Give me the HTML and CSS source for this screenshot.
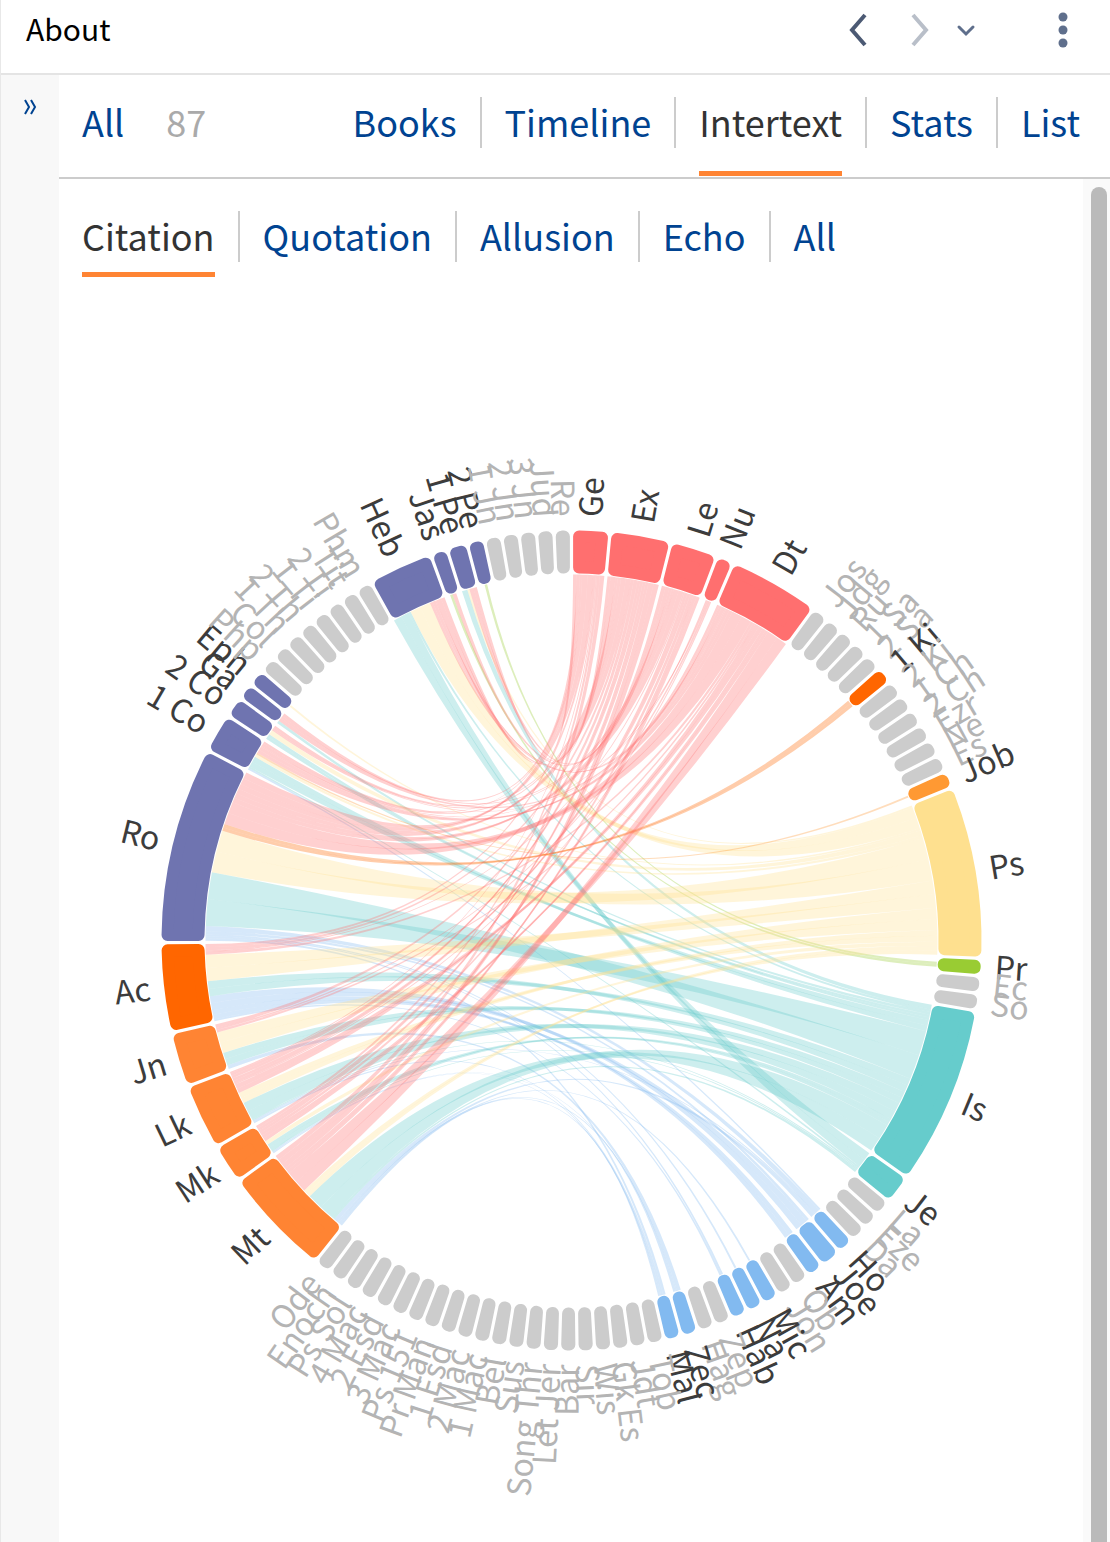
FILE: index.html
```html
<!DOCTYPE html>
<html lang="en">
  <head>
    <meta charset="UTF-8" />
    <meta name="viewport" content="width=device-width, initial-scale=1.0" />
    <title>About</title>
    <link rel="stylesheet" href="styles.css">
  </head>

  <body>
    <header class="titlebar">
      <h1>About</h1>
      <div class="history">
        <button class="icon back" aria-label="Back">
          <svg width="20" height="34" viewBox="0 0 20 34"><path d="M17 2L4 17L17 32" /></svg>
        </button>
        <button class="icon forward" aria-label="Forward">
          <svg width="20" height="34" viewBox="0 0 20 34"><path d="M3 2L16 17L3 32" /></svg>
        </button>
        <button class="icon more" aria-label="History">
          <svg width="20" height="14" viewBox="0 0 20 14"><path d="M3 4L10 11L17 4" /></svg>
        </button>
        <button class="icon menu" aria-label="Menu">
          <svg width="10" height="36" viewBox="0 0 10 36"><circle cx="5" cy="5" r="4.5" /><circle cx="5" cy="18" r="4.5" /><circle cx="5" cy="31" r="4.5" /></svg>
        </button>
      </div>
    </header>

    <div class="page">
      <aside class="sidebar">
        <button class="icon expand" aria-label="Expand sidebar">
          <svg width="16" height="18" viewBox="0 0 16 18"><path d="M2 2L6 9L2 16M8 2L12 9L8 16" /></svg>
        </button>
      </aside>

      <main>
        <div class="toolbar">
          <a href="#all">All</a>
          <span class="count">87</span>
          <ul class="tabs views">
            <li><button>Books</button></li>
            <li><button>Timeline</button></li>
            <li><button class="selected">Intertext</button></li>
            <li><button>Stats</button></li>
            <li><button>List</button></li>
          </ul>
        </div>

        <div class="content">
          <section class="intertext">
            <ul class="tabs kinds">
              <li><button class="selected">Citation</button></li>
              <li><button>Quotation</button></li>
              <li><button>Allusion</button></li>
              <li><button>Echo</button></li>
              <li><button>All</button></li>
            </ul>
            <svg class="chord" viewBox="0 0 1024 1240" role="img" aria-label="Citations between books">
              <g class="ribbons"></g>
              <g class="arcs"></g>
              <g class="labels"></g>
            </svg>
          </section>
          <div class="track"><div class="thumb"></div></div>
        </div>
      </main>
    </div>

    <script src="chord.js"></script>
  </body>
</html>
```
FILE: styles.css
```css
* {
  box-sizing: border-box;
}

body {
  margin: 0;
  min-height: 100vh;
  display: flex;
  flex-direction: column;
  border-left: 1px solid #e8e8e8;
  background-color: white;
  font-family: "Noto Sans CJK SC", "Noto Sans", sans-serif;
  font-size: 36px;
  line-height: 48px;
}

button {
  padding: 0;
  border: 0;
  background: none;
  font: inherit;
  color: inherit;
  cursor: pointer;
}

.titlebar {
  height: 75px;
  padding: 0 42px 14px 25px;
  display: flex;
  align-items: center;
  justify-content: space-between;
  border-bottom: 2px solid #e4e4e4;
}

h1 {
  margin: 0;
  padding-bottom: 3px;
  font-size: 30px;
  font-weight: 400;
}

.history {
  display: flex;
  align-items: center;
}

.icon {
  display: flex;
}

.icon svg {
  fill: none;
  stroke: #5f6f8c;
  stroke-width: 4;
}

.back svg {
  stroke: #4c5a74;
}

.forward {
  margin-left: 42px;
}

.forward svg {
  stroke: #b9bfc9;
}

.more {
  margin-left: 26px;
}

.more svg {
  stroke-width: 3;
  stroke-linecap: round;
}

.menu {
  margin-left: 82px;
}

.menu svg {
  fill: #5f6f8c;
  stroke: none;
}

.page {
  flex: 1;
  display: flex;
}

.sidebar {
  width: 58px;
  padding: 23px 22px;
  background-color: #f8f8f8;
}

.expand svg {
  stroke: #004391;
  stroke-width: 2;
}

main {
  flex: 1;
  min-width: 0;
  display: flex;
  flex-direction: column;
  color: #004391;
}

.toolbar {
  height: 104px;
  padding: 22px 30px 0 23px;
  display: flex;
  border-bottom: 2px solid #ccc;
}

.toolbar a {
  color: inherit;
  text-decoration: none;
}

.count {
  margin-left: 42px;
  color: #aaa;
}

.tabs {
  margin: 0;
  padding: 0;
  display: flex;
  list-style: none;
}

.tabs li {
  height: 51px;
  padding: 0 23px;
  border-left: 2px solid #ccc;
}

.tabs li:first-child {
  padding-left: 0;
  border-left: 0;
}

.tabs li:last-child {
  padding-right: 0;
}

.tabs button {
  display: block;
  border-bottom: 5px solid transparent;
}

.tabs .selected {
  color: #333;
  border-color: #ff8433;
}

.views {
  margin-left: auto;
}

.views button {
  padding-bottom: 26px;
}

.kinds button {
  padding-bottom: 13px;
}

.content {
  flex: 1;
  display: flex;
}

.intertext {
  flex: 1;
  min-width: 0;
}

.kinds {
  height: 123px;
  padding: 32px 0 0 23px;
}

.chord {
  display: block;
  width: 100%;
}

.ribbons path {
  fill-opacity: 0.33;
}

.arcs path {
  stroke-width: 12;
  stroke-linejoin: round;
}

.labels text {
  font-size: 32px;
  fill: #3c3c3c;
}

.labels .empty {
  fill: #b4b4b4;
}

.track {
  width: 27px;
  padding: 8px 3px 0 8px;
  display: flex;
  background-color: #fafafa;
}

.thumb {
  flex: 1;
  border-radius: 8px 8px 0 0;
  background-color: #bababa;
}
```
FILE: chord.js
```js
const cx = 512.5;
const cy = 638.5;
const inner = 367;
const outer = 410;
const corner = 6;
const gap = 1.6;
const emptySize = 2.46;

const red = "#ff6f6f";
const teal = "#66cccc";
const blue = "#82baf0";
const gospel = "#ff8433";
const letter = "#6f74b0";

// name, colour, size in degrees; a bare name is a book with no citations
const books = [
  ["Ge", red, 5.4], ["Ex", red, 8.65], ["Le", red, 6.7], ["Nu", red, 2.46], ["Dt", red, 12.9],
  "Jos", "Jdg", "Ru", "1 Sa", "2 Sa", ["1 Ki", "#ff6600", 2.46],
  "2 Ki", "1 Ch", "2 Ch", "Ezr", "Ne", "Es", ["Job", "#ff9933", 2.46],
  ["Ps", "#fee08f", 24.4], ["Pr", "#99cc33", 2.46], "Ec", "So",
  ["Is", teal, 25.4], ["Je", teal, 4.2], "La", "Eze", "Da",
  ["Ho", blue, 2.46], ["Joe", blue, 3], ["Am", blue, 2.46], "Ob", "Jon",
  ["Mic", blue, 2.46], ["Na", blue, 2.46], ["Hab", blue, 2.46], "Zep", "Hag",
  ["Zec", blue, 2.46], ["Mal", blue, 2.46],
  "Tob", "Jdt", "Gk Es", "Wis", "Sir", "Bar", "Let Jer", "Song Thr", "Sus", "Bel",
  "1 Mac", "2 Mac", "1 Esd", "Pr Man", "Ps 151", "3 Mac", "2 Esd", "4 Mac",
  "Ps Sol", "Enoch", "Ode",
  ["Mt", gospel, 15.6], ["Mk", gospel, 5.6], ["Lk", gospel, 9.4], ["Jn", gospel, 7.8],
  ["Ac", "#ff6600", 12.7], ["Ro", letter, 27.9], ["1 Co", letter, 5.6], ["2 Co", letter, 3],
  ["Ga", letter, 2.4], ["Eph", letter, 2.46],
  "Php", "Col", "1 Th", "2 Th", "1 Ti", "2 Ti", "Tit", "Phm",
  ["Heb", letter, 9.2], ["Jas", letter, 2.4], ["1 Pe", letter, 2.9], ["2 Pe", letter, 2.46],
  "1 Jn", "2 Jn", "3 Jn", "Jud", "Re",
];

// citing book: cited books with their weights
const citations = {
  "Mt": { Ge: 0.8, Ex: 1.7, Le: 1, Dt: 3.7, Ps: 1.3, Is: 5, Je: 0.4, Ho: 0.6, Mic: 0.3, Zec: 0.4, Mal: 0.3 },
  "Mk": { Ge: 0.5, Ex: 0.9, Le: 0.5, Dt: 1.1, Ps: 0.7, Is: 1.2, Je: 0.2, Zec: 0.2, Mal: 0.2 },
  "Lk": { Ge: 0.2, Ex: 0.9, Le: 0.9, Nu: 0.2, Dt: 1.5, Ps: 1.8, Is: 3, Je: 0.2, Ho: 0.2, Mal: 0.3 },
  "Jn": { Ex: 0.6, Nu: 0.3, Dt: 0.4, Ps: 3.4, Is: 2.1, Zec: 0.6 },
  "Ac": { Ge: 0.5, Ex: 0.5, Le: 0.2, Dt: 0.5, Ps: 4.2, Is: 2.4, Joe: 2.2, Am: 1.5, Hab: 0.3 },
  "Ro": { Ge: 2, Ex: 1.6, Le: 1.5, Dt: 3.6, "1 Ki": 1.1, Ps: 6.6, Is: 8.4, Ho: 0.8, Joe: 0.5, Na: 0.3, Hab: 0.3, Mal: 0.4 },
  "1 Co": { Ge: 0.4, Ex: 0.5, Nu: 0.2, Dt: 1.2, Job: 0.3, Ps: 0.5, Is: 1.9, Je: 0.3, Ho: 0.3 },
  "2 Co": { Ex: 0.4, Le: 0.3, Dt: 0.2, Ps: 0.8, Is: 0.9 },
  "Ga": { Ge: 0.6, Le: 0.4, Dt: 0.6, Is: 0.5 },
  "Eph": { Ps: 0.3 },
  "Heb": { Ge: 0.6, Ex: 0.8, Nu: 0.2, Dt: 0.9, Ps: 3.4, Is: 0.4, Je: 2.6 },
  "Jas": { Le: 0.6, Pr: 0.4 },
  "1 Pe": { Ex: 0.5, Le: 0.6, Ps: 0.3, Is: 0.8 },
  "2 Pe": { Pr: 0.4 },
};

const groups = [];
let angle = 0;
books.forEach((book) => {
  const [name, color, size] = Array.isArray(book) ? book : [book, "#ccc", emptySize];
  groups.push({ name, color, size, start: angle, empty: !Array.isArray(book), links: [] });
  angle += size;
});
// let the sizes close the circle exactly
groups.forEach((group) => {
  group.start *= 360 / angle;
  group.size *= 360 / angle;
});

function point(degrees, radius, offset = 0) {
  const a = (degrees * Math.PI) / 180 + offset / radius;
  return (cx + radius * Math.sin(a)).toFixed(2) + "," + (cy - radius * Math.cos(a)).toFixed(2);
}

function add(parent, tag, attributes) {
  const node = document.createElementNS("http://www.w3.org/2000/svg", tag);
  Object.entries(attributes).forEach(([key, value]) => node.setAttribute(key, value));
  document.querySelector(parent).appendChild(node);
  return node;
}

function drawArc(group) {
  const end = group.start + group.size;
  const inset = gap + corner;
  const r0 = inner + corner;
  const r1 = outer - corner;
  add(".arcs", "path", {
    d: `M${point(group.start, r1, inset)} A${r1},${r1} 0 0 1 ${point(end, r1, -inset)}
        L${point(end, r0, -inset)} A${r0},${r0} 0 0 0 ${point(group.start, r0, inset)}Z`,
    fill: group.color,
    stroke: group.color,
  });
}

function drawLabel(group) {
  const middle = group.start + group.size / 2;
  const left = middle > 180;
  const [x, y] = point(middle, outer + 14).split(",");
  const text = add(".labels", "text", {
    x,
    y,
    dy: "0.34em",
    "text-anchor": left ? "end" : "start",
    transform: `rotate(${left ? middle + 90 : middle - 90} ${x} ${y})`,
  });
  if (group.empty) text.classList.add("empty");
  text.textContent = group.name;
}

function drawRibbon(color, s0, s1, t0, t1) {
  const r = inner - 1;
  add(".ribbons", "path", {
    d: `M${point(s0, r)} A${r},${r} 0 0 1 ${point(s1, r)} Q${cx},${cy} ${point(t0, r)}
        A${r},${r} 0 0 1 ${point(t1, r)} Q${cx},${cy} ${point(s0, r)}Z`,
    fill: color,
  });
}

const find = (name) => groups.find((group) => group.name == name);
const links = [];
Object.entries(citations).forEach(([from, cited]) => {
  Object.entries(cited).forEach(([to, weight]) => {
    const link = { from: find(from), to: find(to), weight };
    links.push(link);
    link.from.links.push(link);
    link.to.links.push(link);
  });
});

// share each arc between its links, farthest book first
groups.forEach((group) => {
  const index = groups.indexOf(group);
  const other = (link) => groups.indexOf(link.from == group ? link.to : link.from);
  const distance = (link) => (other(link) - index + groups.length) % groups.length;
  group.links.sort((a, b) => distance(b) - distance(a));

  const room = group.size - 0.5;
  const total = group.links.reduce((sum, link) => sum + link.weight, 0);
  const scale = group.size > 2.6 ? room / total : Math.min(1, room / total);
  let at = group.start + (group.size - total * scale) / 2;
  group.links.forEach((link) => {
    const end = at + link.weight * scale;
    link[link.from == group ? "source" : "target"] = [at, end];
    at = end;
  });
});

links.reverse().forEach(({ to, source, target, weight }) => {
  const parts = weight > 0.8 ? 2 : 1;
  const s = (source[1] - source[0]) / parts;
  const t = (target[1] - target[0]) / parts;
  for (let i = 0; i < parts; i++) {
    drawRibbon(to.color, source[0] + i * s, source[0] + (i + 1) * s, target[0] + i * t, target[0] + (i + 1) * t);
  }
});

groups.forEach(drawArc);
groups.forEach(drawLabel);
```
